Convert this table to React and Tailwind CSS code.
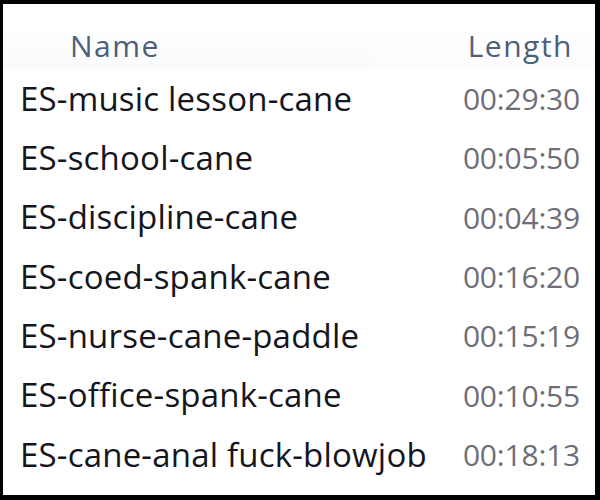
const rows = [
  ["ES-music lesson-cane", "00:29:30"],
  ["ES-school-cane", "00:05:50"],
  ["ES-discipline-cane", "00:04:39"],
  ["ES-coed-spank-cane", "00:16:20"],
  ["ES-nurse-cane-paddle", "00:15:19"],
  ["ES-office-spank-cane", "00:10:55"],
  ["ES-cane-anal fuck-blowjob", "00:18:13"],
];

export default function App() {
  return (
    <div className="w-[600px] h-[500px] bg-black pt-[4px] pl-[3px] pr-[5px] pb-[5px]">
      <div className="h-full bg-white flex flex-col font-['Open_Sans',sans-serif]">
        <div className="flex h-[65px] pt-[21px]">
          <div className="w-[367px] h-[44px] bg-gradient-to-b from-white to-[#f9fafb] flex items-center pb-[4px] pl-[67px] text-[30px] tracking-[1.5px] text-[#4d5f7a]">
            Name
          </div>
          <div className="flex-1 h-[44px] bg-gradient-to-b from-white to-[#fcfcfd] flex items-center justify-end pb-[4px] pr-[22px] text-[30px] tracking-[1.5px] text-[#4d5f7a]">
            Length
          </div>
        </div>
        <div className="flex flex-col">
          {rows.map(([name, len]) => (
            <div key={name} className="h-[59.3px] flex items-center pl-[17px] pr-[15px]">
              <span className="flex-1 text-[33px] font-medium text-[#15151d] tracking-[0.2px]">{name}</span>
              <span className="text-[30px] text-[#6e6e78] tracking-[-0.2px]">{len}</span>
            </div>
          ))}
        </div>
      </div>
    </div>
  );
}
